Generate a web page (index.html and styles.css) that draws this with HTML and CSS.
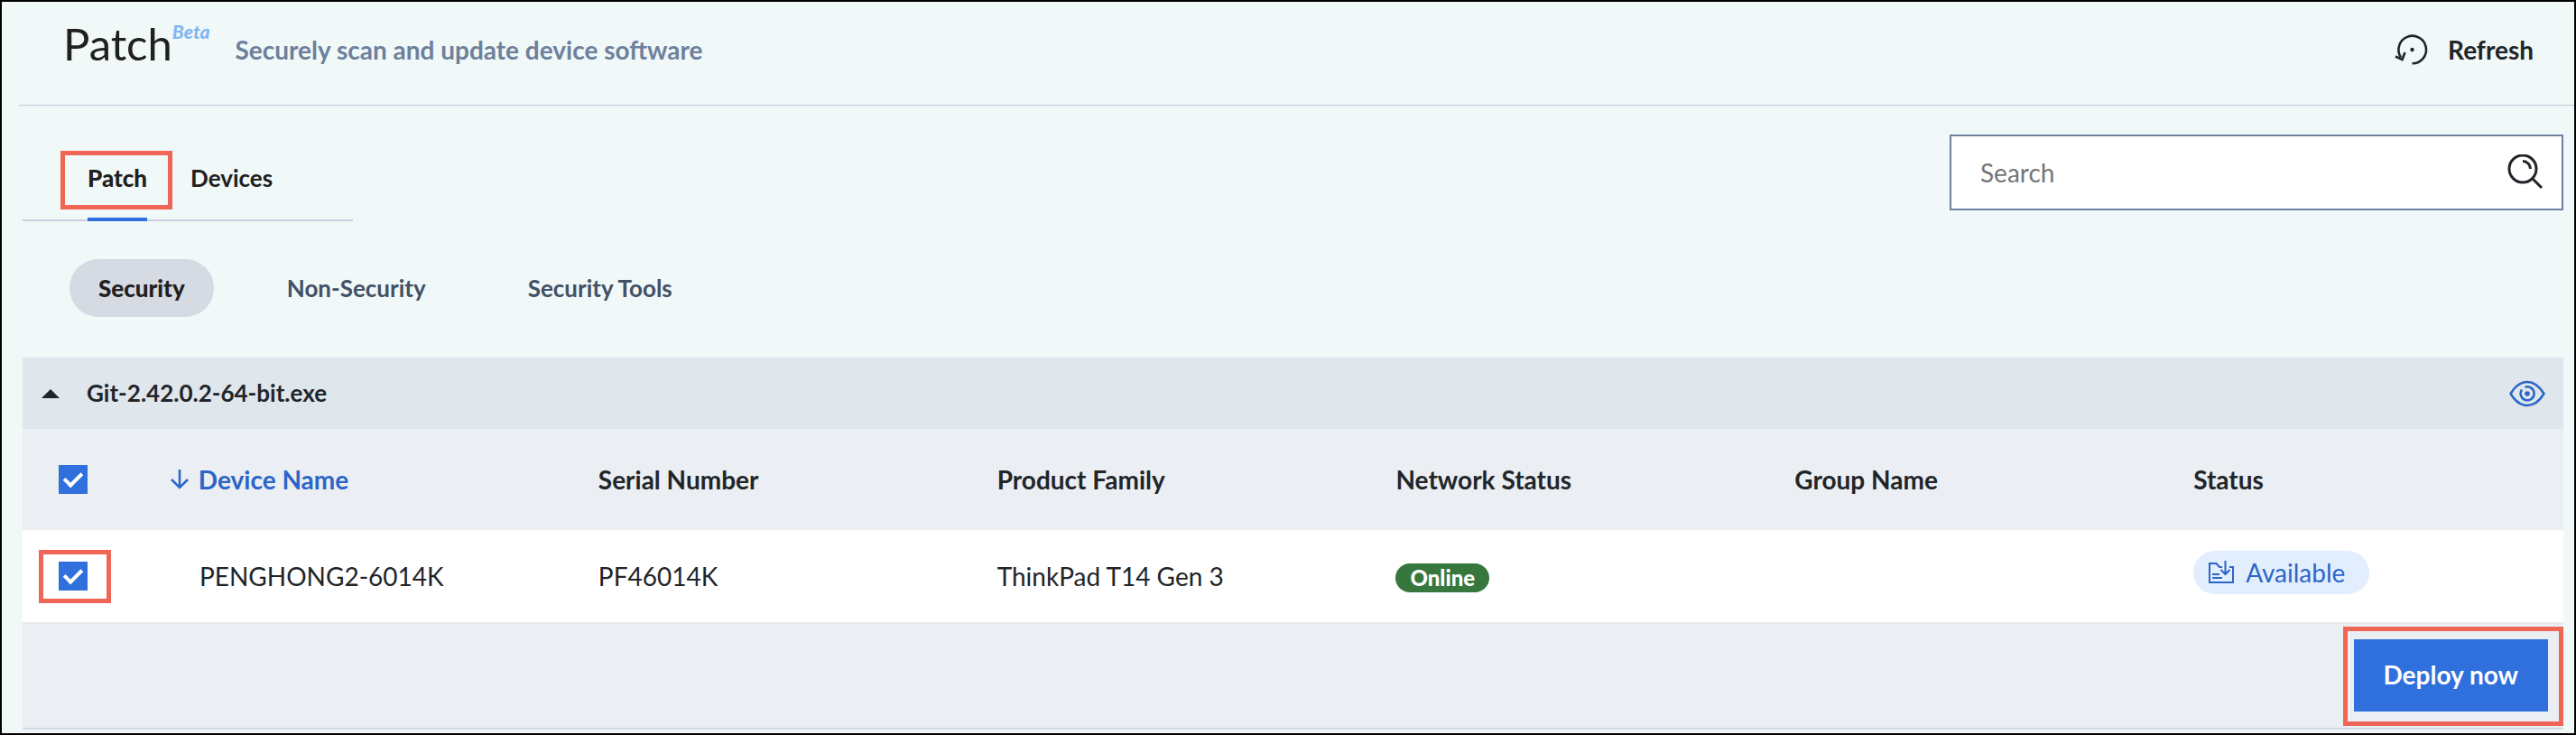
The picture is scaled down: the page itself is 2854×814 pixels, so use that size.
FILE: index.html
```
<!DOCTYPE html>
<html lang="en">
<head>
  <meta charset="UTF-8" />
  <meta name="viewport" content="width=device-width, initial-scale=1.0"/>
  <title>Patch</title>
  <link rel="stylesheet" href="styles.css">
</head>
<body>
  <header class="page-header">
    <h1>Patch<sup class="beta">Beta</sup></h1>
    <p class="subtitle">Securely scan and update device software</p>
    <button class="refresh" type="button">
      <svg width="40" height="40" viewBox="0 0 40 40" fill="none" stroke="currentColor" stroke-width="2.600">
        <path d="M8 28.500A15.300 15.300 0 1 1 20.500 35.300"/>
        <path d="M2 27.500L9.500 31L12.500 23"/>
        <circle cx="20.500" cy="20" r="2.200" fill="currentColor" stroke="none"/>
      </svg>
      Refresh
    </button>
  </header>

  <div class="toolbar">
    <nav class="tabs">
      <a class="tab active marked" href="#patch">Patch</a>
      <a class="tab" href="#devices">Devices</a>
    </nav>
    <div class="search">
      <input type="text" placeholder="Search" aria-label="Search">
      <svg width="40" height="40" viewBox="0 0 40 40" fill="none" stroke="currentColor" stroke-width="3">
        <circle cx="17" cy="16" r="15"/>
        <path d="M17 7.500A8.500 8.500 0 0 1 25.500 16M28 27L38 37"/>
      </svg>
    </div>
  </div>

  <div class="filters">
    <button class="filter selected" type="button">Security</button>
    <button class="filter" type="button">Non-Security</button>
    <button class="filter" type="button">Security Tools</button>
  </div>

  <main class="panel">
    <div class="group">
      <button class="icon-btn" type="button" aria-label="Collapse">
        <svg width="20" height="10" viewBox="0 0 20 10"><path d="M10 0L20 10H0Z" fill="#212529"/></svg>
      </button>
      <h2>Git-2.42.0.2-64-bit.exe</h2>
      <button class="icon-btn view" type="button" aria-label="View">
        <svg width="40" height="30" viewBox="0 0 40 30" fill="none" stroke="currentColor" stroke-width="2.500">
          <path d="M1.500 15Q9.500 2 20 2T38.500 15Q30.500 28 20 28T1.500 15Z" stroke-linejoin="round"/>
          <path d="M17.500 7.800A7.500 7.500 0 1 1 14 10.500"/>
          <circle cx="20" cy="15" r="2.800" fill="currentColor" stroke="none"/>
        </svg>
      </button>
    </div>

    <table>
      <thead>
        <tr>
          <th class="check"><input type="checkbox" aria-label="Select all devices" checked></th>
          <th class="sorted">
            <svg width="20" height="22" viewBox="0 0 20 22" fill="none" stroke="currentColor" stroke-width="2.500"><path d="M10 0V20M1 11L10 20L19 11"/></svg>
            Device Name
          </th>
          <th>Serial Number</th>
          <th>Product Family</th>
          <th>Network Status</th>
          <th>Group Name</th>
          <th>Status</th>
        </tr>
      </thead>
      <tbody>
        <tr>
          <td class="check"><span class="marked"><input type="checkbox" aria-label="Select PENGHONG2-6014K" checked></span></td>
          <td>PENGHONG2-6014K</td>
          <td>PF46014K</td>
          <td>ThinkPad T14 Gen 3</td>
          <td><span class="online">Online</span></td>
          <td></td>
          <td class="status">
            <span class="available">
              <svg width="28" height="26" viewBox="0 0 28 26" fill="none" stroke="currentColor" stroke-width="2">
                <path d="M15 7H12L8.500 3H1V24H27V7H23"/>
                <path d="M4 15H12M4 19H15M18.500 0V15M13.500 10L18.500 15L23.500 10"/>
              </svg>
              Available
            </span>
          </td>
        </tr>
      </tbody>
    </table>

    <div class="actions">
      <span class="marked"><button class="deploy" type="button">Deploy now</button></span>
    </div>
  </main>
</body>
</html>
```

FILE: styles.css
```
* {
  box-sizing: border-box;
}
body {
  margin: 0;
  min-height: 100vh;
  border: 2px solid #000;
  background: #f1f8f8;
  color: #212529;
  font-family: Lato, sans-serif;
  font-size: 28px;
  line-height: 34px;
}
h1, h2, p {
  margin: 0;
}
button {
  border: none;
  background: none;
  padding: 0;
  color: inherit;
  font: inherit;
  cursor: pointer;
}
svg {
  display: block;
  flex: none;
}
.page-header {
  display: flex;
  align-items: center;
  height: 115px;
  margin-left: 19px;
  padding: 0 45px 8px 49px;
  border-bottom: 1px solid #c3c8d8;
}
h1 {
  display: flex;
  align-items: flex-start;
  color: #202020;
  font-size: 49px;
  font-weight: 400;
  line-height: 58px;
  padding-bottom: 14px;
}
.beta {
  color: #82b6f0;
  font-size: 21px;
  font-style: italic;
  font-weight: 900;
  line-height: 32px;
}
.subtitle {
  margin-left: 28px;
  color: #6d809c;
  font-weight: 700;
}
.refresh {
  display: flex;
  align-items: center;
  gap: 20px;
  margin-left: auto;
  font-weight: 700;
}

/* tabs + search */
.toolbar {
  display: flex;
  justify-content: space-between;
  align-items: flex-start;
  padding: 32px 12px 0 23px;
}
.tabs {
  display: flex;
  gap: 48px;
  width: 366px;
  height: 96px;
  padding-left: 72px;
  border-bottom: 2px solid #cbcfde;
}
.tab {
  height: 96px;
  padding-top: 32px;
  color: #202020;
  font-size: 26px;
  font-weight: 700;
  line-height: 32px;
  text-decoration: none;
}
.tab.active {
  border-bottom: 4px solid #2f70dc;
  font-weight: 900;
}
.marked {
  position: relative;
}
.marked::after {
  content: "";
  position: absolute;
  border: 5px solid #ef6656;
  pointer-events: none;
}
.tab.marked::after {
  inset: 18px -28px 9px -30px;
}
.search {
  display: flex;
  align-items: center;
  width: 680px;
  height: 84px;
  padding: 0 20px 0 32px;
  border: 2px solid #7080a0;
  background: #fff;
}
.search input {
  flex: 1;
  border: none;
  outline: none;
  padding: 0;
  background: none;
  font: inherit;
}
.search input::placeholder {
  color: #757575;
}

.filters {
  display: flex;
  gap: 49px;
  padding: 42px 0 45px 75px;
}
.filter {
  height: 64px;
  padding: 0 32px;
  border-radius: 32px;
  color: #435066;
  font-size: 26px;
  font-weight: 700;
}
.filter.selected {
  background: #d5dae3;
  color: #202020;
  font-weight: 900;
}

/* device list */
.panel {
  margin: 0 12px 4px 23px;
  border-bottom: 2px solid #d3dae5;
  background: #ebeef3;
}
.group {
  display: flex;
  align-items: center;
  height: 79px;
  padding: 0 20px 0 21px;
  background: #dfe6ec;
}
.group h2 {
  margin-left: 30px;
  padding-bottom: 1px;
  font-size: 26px;
  font-weight: 700;
}
.view {
  margin-left: auto;
  color: #2b65c9;
}
table {
  width: 100%;
  border-collapse: separate;
  border-spacing: 0;
  table-layout: fixed;
}
th, td {
  padding: 0 0 0 32px;
  text-align: left;
}
th {
  height: 112px;
}
td {
  height: 104px;
  border-bottom: 2px solid #e8ebed;
  background: #fff;
}
.check {
  width: 164px;
  padding-left: 40px;
}
.sorted {
  padding-left: 0;
  color: #2b65c9;
}
.sorted svg {
  display: inline-block;
  margin-right: 4px;
}
input[type="checkbox"] {
  appearance: none;
  display: block;
  width: 32px;
  height: 32px;
  margin: 0;
  background: #2f70dc;
}
input[type="checkbox"]:checked {
  padding: 4px 0 0 10px;
}
input[type="checkbox"]:checked::before {
  content: "";
  display: block;
  width: 8px;
  height: 16px;
  border: solid #fff;
  border-width: 0 4px 4px 0;
  transform: rotate(45deg);
}
.check .marked {
  display: block;
  width: 32px;
}
.check .marked::after {
  inset: -13px -26px -14px -22px;
}
.online {
  display: inline-block;
  padding: 0 16px;
  border-radius: 16px;
  background: #35773d;
  color: #fff;
  font-size: 24px;
  font-weight: 900;
  line-height: 32px;
  vertical-align: middle;
}
.status {
  padding-bottom: 8px;
}
.available {
  display: inline-flex;
  align-items: center;
  gap: 13px;
  height: 48px;
  padding: 0 27px 0 17px;
  border-radius: 24px;
  background: #e2eefd;
  color: #2b65c9;
  vertical-align: middle;
}
.actions {
  display: flex;
  justify-content: flex-end;
  padding: 17px 17px 18px;
}
.actions .marked::after {
  inset: -14px -17px -16px -12px;
}
.deploy {
  display: block;
  height: 80px;
  padding: 0 33px 2px;
  background: #2f70dc;
  color: #fff;
  font-weight: 700;
}
```
